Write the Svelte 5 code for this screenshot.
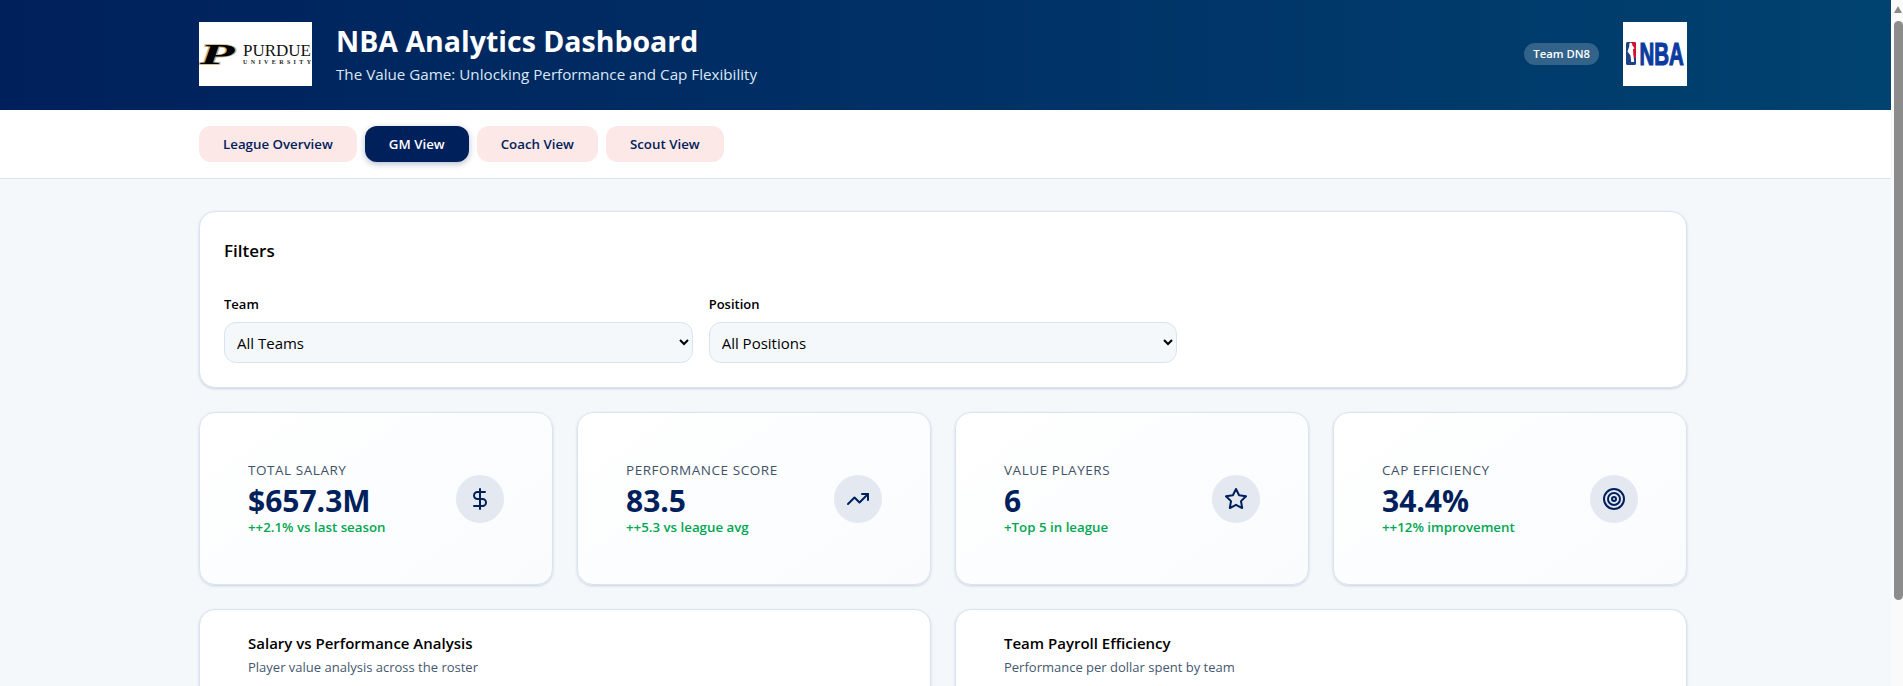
<script>
  const stats = [
    { label: 'Total Salary', value: '$657.3M', delta: '++2.1% vs last season', icon: 'dollar' },
    { label: 'Performance Score', value: '83.5', delta: '++5.3 vs league avg', icon: 'trend' },
    { label: 'Value Players', value: '6', delta: '+Top 5 in league', icon: 'star' },
    { label: 'Cap Efficiency', value: '34.4%', delta: '++12% improvement', icon: 'target' }
  ];
  const tabs = ['League Overview', 'GM View', 'Coach View', 'Scout View'];
  const charts = [
    { title: 'Salary vs Performance Analysis', sub: 'Player value analysis across the roster' },
    { title: 'Team Payroll Efficiency', sub: 'Performance per dollar spent by team' }
  ];
</script>

<div class="page">
  <header class="top">
    <div class="wrap top-row">
      <div class="brand">
        <svg class="logo purdue" viewBox="0 0 113 64" role="img" aria-label="Purdue University">
          <rect width="113" height="64" fill="#fff" />
          <text class="p-mark" x="0" y="0" transform="translate(1 42) scale(1.95 .98)">P</text>
          <text class="p-word" x="44" y="34" textLength="68" lengthAdjust="spacingAndGlyphs">PURDUE</text>
          <text class="p-sub" x="44" y="41.5" textLength="68">UNIVERSITY</text>
        </svg>
        <div class="brand-text">
          <h1>NBA Analytics Dashboard</h1>
          <p>The Value Game: Unlocking Performance and Cap Flexibility</p>
        </div>
      </div>
      <div class="team">
        <span class="pill">Team DN8</span>
        <svg class="logo nba" viewBox="0 0 64 64" role="img" aria-label="NBA">
          <rect width="64" height="64" fill="#fff" />
          <rect x="3" y="20" width="10" height="23" rx="1.5" fill="#1d428a" />
          <path d="M8 20h3.5A1.5 1.5 0 0 1 13 21.500V36H8z" fill="#d4122f" />
          <path d="M6.500 21c1.800-.6 3 .5 2.800 2.200l2.200 3-1.500 1 .3 5 .9 7.800H8.200l-.7-6.500-3-4 1.700-5z" fill="#fff" />
          <text class="n-word" x="0" y="0" transform="translate(16.500 43) scale(.66 1)">NBA</text>
        </svg>
      </div>
    </div>
  </header>

  <nav class="tabs">
    <div class="wrap tab-row">
      {#each tabs as t}
        <button class="tab" class:active={t === 'GM View'}>{t}</button>
      {/each}
    </div>
  </nav>

  <main class="wrap content">
    <section class="card filters">
      <h2>Filters</h2>
      <div class="filter-grid">
        <label class="field">
          <span>Team</span>
          <select><option>All Teams</option></select>
        </label>
        <label class="field">
          <span>Position</span>
          <select><option>All Positions</option></select>
        </label>
      </div>
    </section>

    <section class="stats">
      {#each stats as s}
        <article class="card stat">
          <div class="stat-text">
            <div class="stat-label">{s.label}</div>
            <div class="stat-value">{s.value}</div>
            <div class="stat-delta">{s.delta}</div>
          </div>
          <div class="stat-icon">
            <svg viewBox="0 0 24 24" width="24" height="24" fill="none" stroke="currentColor" stroke-width="2" stroke-linecap="round" stroke-linejoin="round">
              {#if s.icon === 'dollar'}
                <line x1="12" y1="2" x2="12" y2="22" />
                <path d="M17 5H9.5a3.5 3.5 0 0 0 0 7h5a3.5 3.5 0 0 1 0 7H6" />
              {:else if s.icon === 'trend'}
                <polyline points="22 7 13.5 15.5 8.5 10.5 2 17" />
                <polyline points="16 7 22 7 22 13" />
              {:else if s.icon === 'star'}
                <polygon points="12 2 15.09 8.26 22 9.27 17 14.14 18.18 21.02 12 17.77 5.82 21.02 7 14.14 2 9.27 8.91 8.26 12 2" />
              {:else}
                <circle cx="12" cy="12" r="10" />
                <circle cx="12" cy="12" r="6" />
                <circle cx="12" cy="12" r="2" />
              {/if}
            </svg>
          </div>
        </article>
      {/each}
    </section>

    <section class="charts">
      {#each charts as c}
        <article class="card chart">
          <h3>{c.title}</h3>
          <p>{c.sub}</p>
        </article>
      {/each}
    </section>
  </main>

  <div class="scrollbar" aria-hidden="true">
    <span class="sb-arrow"></span>
    <span class="sb-thumb"></span>
  </div>
</div>

<style>
  :global(html), :global(body) { margin: 0; height: 686px; overflow: hidden; }
  :global(body) { background: #f4f8fb; }

  .page {
    margin-right: 12px;
    height: 686px;
    overflow: hidden;
    background: #f4f8fb;
    font-family: "Open Sans", "Noto Sans", sans-serif;
    color: #000;
  }
  .wrap { width: 1488px; margin-left: 199px; }

  .top {
    box-sizing: border-box;
    height: 110px;
    padding-top: 22px;
    background: linear-gradient(90deg, #00205b 0%, #004270 100%);
  }
  .top-row { display: flex; justify-content: space-between; align-items: center; }
  .brand { display: flex; align-items: center; gap: 24px; }
  .brand-text { padding-top: 1px; }
  .logo { display: block; height: 64px; }
  .purdue { width: 113px; }
  .nba { width: 64px; }
  .p-mark { font: italic 900 29px "Liberation Serif", serif; fill: #000; stroke: #c8b48a; stroke-width: 1.6px; paint-order: stroke; }
  .p-word { font: 400 17px "Liberation Serif", serif; fill: #111; }
  .p-sub { font: 700 6px "Liberation Serif", serif; fill: #222; }
  .n-word { font: 700 31px "Liberation Sans", sans-serif; fill: #0b3b9f; stroke: #0b3b9f; stroke-width: 1.2px; }
  h1 { margin: 0; font-size: 28.5px; line-height: 36px; font-weight: 700; color: #fff; }
  .brand p { margin: 3px 0 0; font-size: 15.2px; line-height: 24px; color: #dbe7f5; }
  .team { display: flex; align-items: center; gap: 24px; }
  .pill {
    height: 22px;
    padding: 0 9px;
    border-radius: 11px;
    background: rgba(255, 255, 255, 0.2);
    color: #fff;
    font-size: 11.3px;
    font-weight: 600;
    line-height: 22px;
  }

  .tabs { height: 68px; background: #fff; border-bottom: 1px solid #d8e4f0; display: flex; align-items: center; }
  .tab-row { display: flex; gap: 8px; }
  .tab {
    height: 36px;
    padding: 0 24px;
    border: 0;
    border-radius: 12px;
    background: #fce8e6;
    color: #00205b;
    font-family: inherit;
    font-size: 13.3px;
    font-weight: 600;
  }
  .tab.active { background: #00205b; color: #fff; box-shadow: 0 2px 6px rgba(0, 32, 91, 0.3); }

  .content { padding-top: 32px; display: flex; flex-direction: column; gap: 24px; }
  .card {
    box-sizing: border-box;
    border: 1px solid #d8e4f0;
    border-radius: 16px;
    background: #fff;
    box-shadow: 0 1px 3px rgba(0, 32, 91, 0.12), 0 1px 2px rgba(0, 32, 91, 0.06);
  }

  .filters { height: 177px; padding: 24px 24px 24px; }
  h2 { margin: 0; font-size: 17px; line-height: 30px; font-weight: 600; color: #000; }
  .filter-grid { margin-top: 28px; display: grid; grid-template-columns: repeat(3, 1fr); gap: 16px; }
  .field { display: flex; flex-direction: column; gap: 8px; }
  .field span { font-size: 13px; line-height: 20px; font-weight: 600; }
  select {
    height: 41px;
    padding: 0 8px;
    border: 1px solid #d8e4f0;
    border-radius: 12px;
    background: #f4f8fb;
    color: #000;
    font-family: inherit;
    font-size: 15px;
  }

  .stats { display: grid; grid-template-columns: repeat(4, 1fr); gap: 24px; }
  .stat {
    height: 173px;
    padding: 48px;
    display: flex;
    justify-content: space-between;
    align-items: center;
    background: linear-gradient(145deg, #fff 0%, #f9fbfd 100%);
  }
  .stat-label { font-size: 13.5px; line-height: 19px; font-weight: 500; color: #3f5268; text-transform: uppercase; letter-spacing: 0.55px; }
  .stat-value { margin-top: 2px; font-size: 30px; line-height: 37px; font-weight: 700; color: #00205b; }
  .stat-delta { margin-top: -1px; font-size: 13.3px; line-height: 18px; font-weight: 600; color: #00a651; }
  .stat-icon {
    width: 48px;
    height: 48px;
    border-radius: 50%;
    background: #e4e8f1;
    color: #00205b;
    display: flex;
    align-items: center;
    justify-content: center;
  }

  .charts { display: grid; grid-template-columns: repeat(2, 1fr); gap: 24px; }
  .chart { height: 300px; padding: 21px 48px; }
  h3 { margin: 0; font-size: 15px; line-height: 24px; font-weight: 600; color: #000; }
  .chart p { margin: 2px 0 0; font-size: 13px; line-height: 20px; color: #44586f; }

  .scrollbar { position: fixed; top: 0; right: 0; bottom: 0; width: 12px; background: #fafafa; }
  .sb-arrow {
    position: absolute;
    top: 6px;
    left: 3px;
    border-left: 4.5px solid transparent;
    border-right: 4.5px solid transparent;
    border-bottom: 7px solid #8a8a8a;
  }
  .sb-thumb {
    position: absolute;
    top: 21px;
    left: 3px;
    width: 9px;
    height: 579px;
    border-radius: 5px;
    background: #8c8c8c;
  }
</style>
